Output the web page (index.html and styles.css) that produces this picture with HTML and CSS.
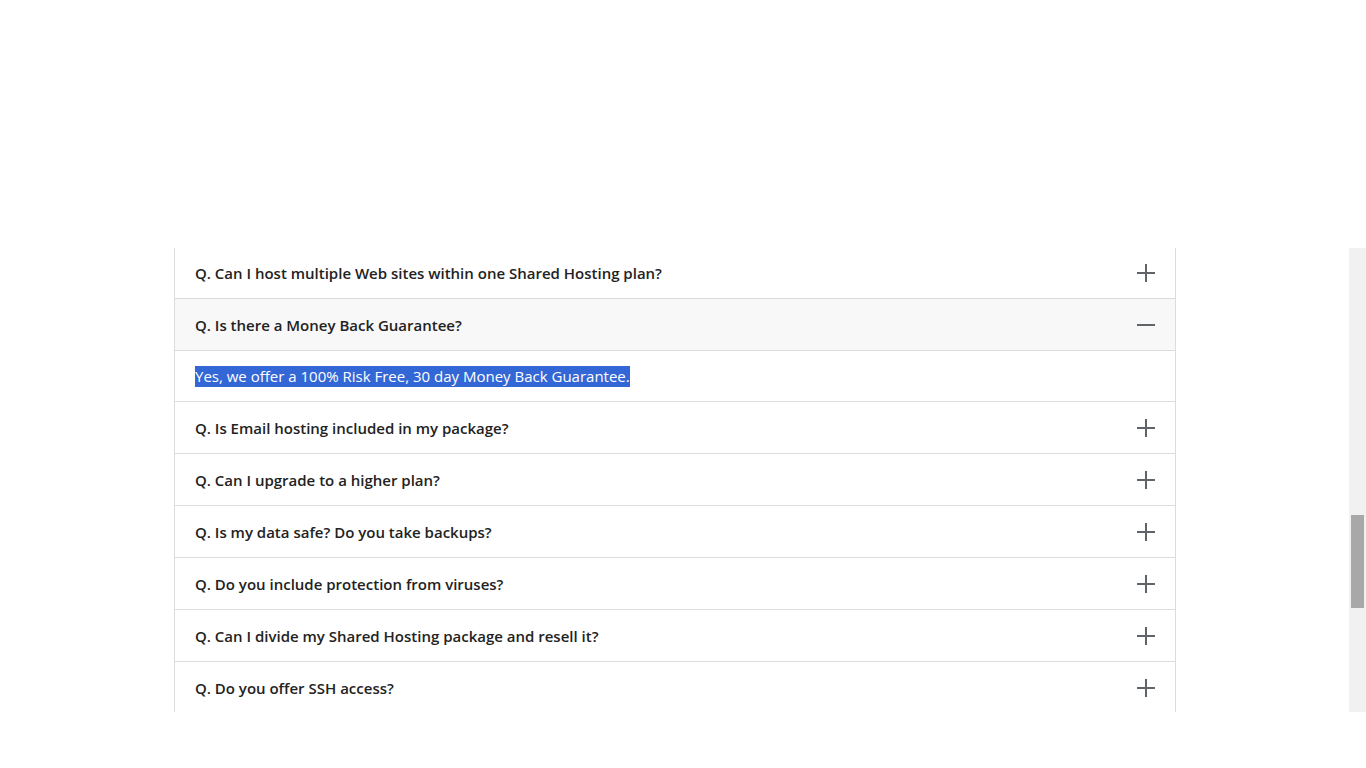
FILE: index.html
```html
<!DOCTYPE html>
<html>
<head>
<meta charset="utf-8">
<link rel="stylesheet" href="styles.css">
</head>
<body>
<div class="spacer"></div>
<div class="frame">
  <div class="viewport">
    <div class="faq">
      <div class="q"><span>Q. Can I host multiple Web sites within one Shared Hosting plan?</span><svg class="ic" viewBox="0 0 18 18"><path d="M0 9H18M9 0V18"/></svg></div>
      <div class="q open"><span>Q. Is there a Money Back Guarantee?</span><svg class="ic" viewBox="0 0 18 18"><path d="M0 9H18"/></svg></div>
      <div class="a"><span class="sel">Yes, we offer a 100% Risk Free, 30 day Money Back Guarantee.</span></div>
      <div class="q"><span>Q. Is Email hosting included in my package?</span><svg class="ic" viewBox="0 0 18 18"><path d="M0 9H18M9 0V18"/></svg></div>
      <div class="q"><span>Q. Can I upgrade to a higher plan?</span><svg class="ic" viewBox="0 0 18 18"><path d="M0 9H18M9 0V18"/></svg></div>
      <div class="q"><span>Q. Is my data safe? Do you take backups?</span><svg class="ic" viewBox="0 0 18 18"><path d="M0 9H18M9 0V18"/></svg></div>
      <div class="q"><span>Q. Do you include protection from viruses?</span><svg class="ic" viewBox="0 0 18 18"><path d="M0 9H18M9 0V18"/></svg></div>
      <div class="q"><span>Q. Can I divide my Shared Hosting package and resell it?</span><svg class="ic" viewBox="0 0 18 18"><path d="M0 9H18M9 0V18"/></svg></div>
      <div class="q"><span>Q. Do you offer SSH access?</span><svg class="ic" viewBox="0 0 18 18"><path d="M0 9H18M9 0V18"/></svg></div>
    </div>
  </div>
  <div class="scrollbar"><div class="thumb"></div></div>
</div>
</body>
</html>
```
FILE: styles.css
```css
html, body {
  margin: 0;
  padding: 0;
  background: #fff;
  font-family: "Open Sans", "Liberation Sans", sans-serif;
}
.spacer { height: 248px; }
.frame {
  display: flex;
  height: 464px;
  overflow: hidden;
}
.viewport {
  flex: 1;
  overflow: hidden;
}
.faq {
  width: 1000px;
  margin: -2px 0 0 174px;
  border: 1px solid #dcdcdc;
}
.q, .a {
  display: flex;
  align-items: center;
  justify-content: space-between;
  padding: 0 20px;
  border-top: 1px solid #dcdcdc;
  font-size: 15px;
  color: #222;
}
.q:first-child { border-top: none; }
.q {
  height: 51px;
  font-weight: 600;
}
.q.open { background: #f8f8f8; }
.a {
  height: 50px;
  font-weight: 400;
}
.sel {
  background: #3367d6;
  color: #fff;
  line-height: 21px;
}
.ic {
  width: 18px;
  height: 18px;
  stroke: #606368;
  stroke-width: 2;
  fill: none;
}
.scrollbar {
  width: 17px;
  background: #f1f1f1;
  padding-top: 267px;
  box-sizing: border-box;
}
.thumb {
  width: 13px;
  height: 93px;
  margin-left: 2px;
  background: #a8a8a8;
}
```
